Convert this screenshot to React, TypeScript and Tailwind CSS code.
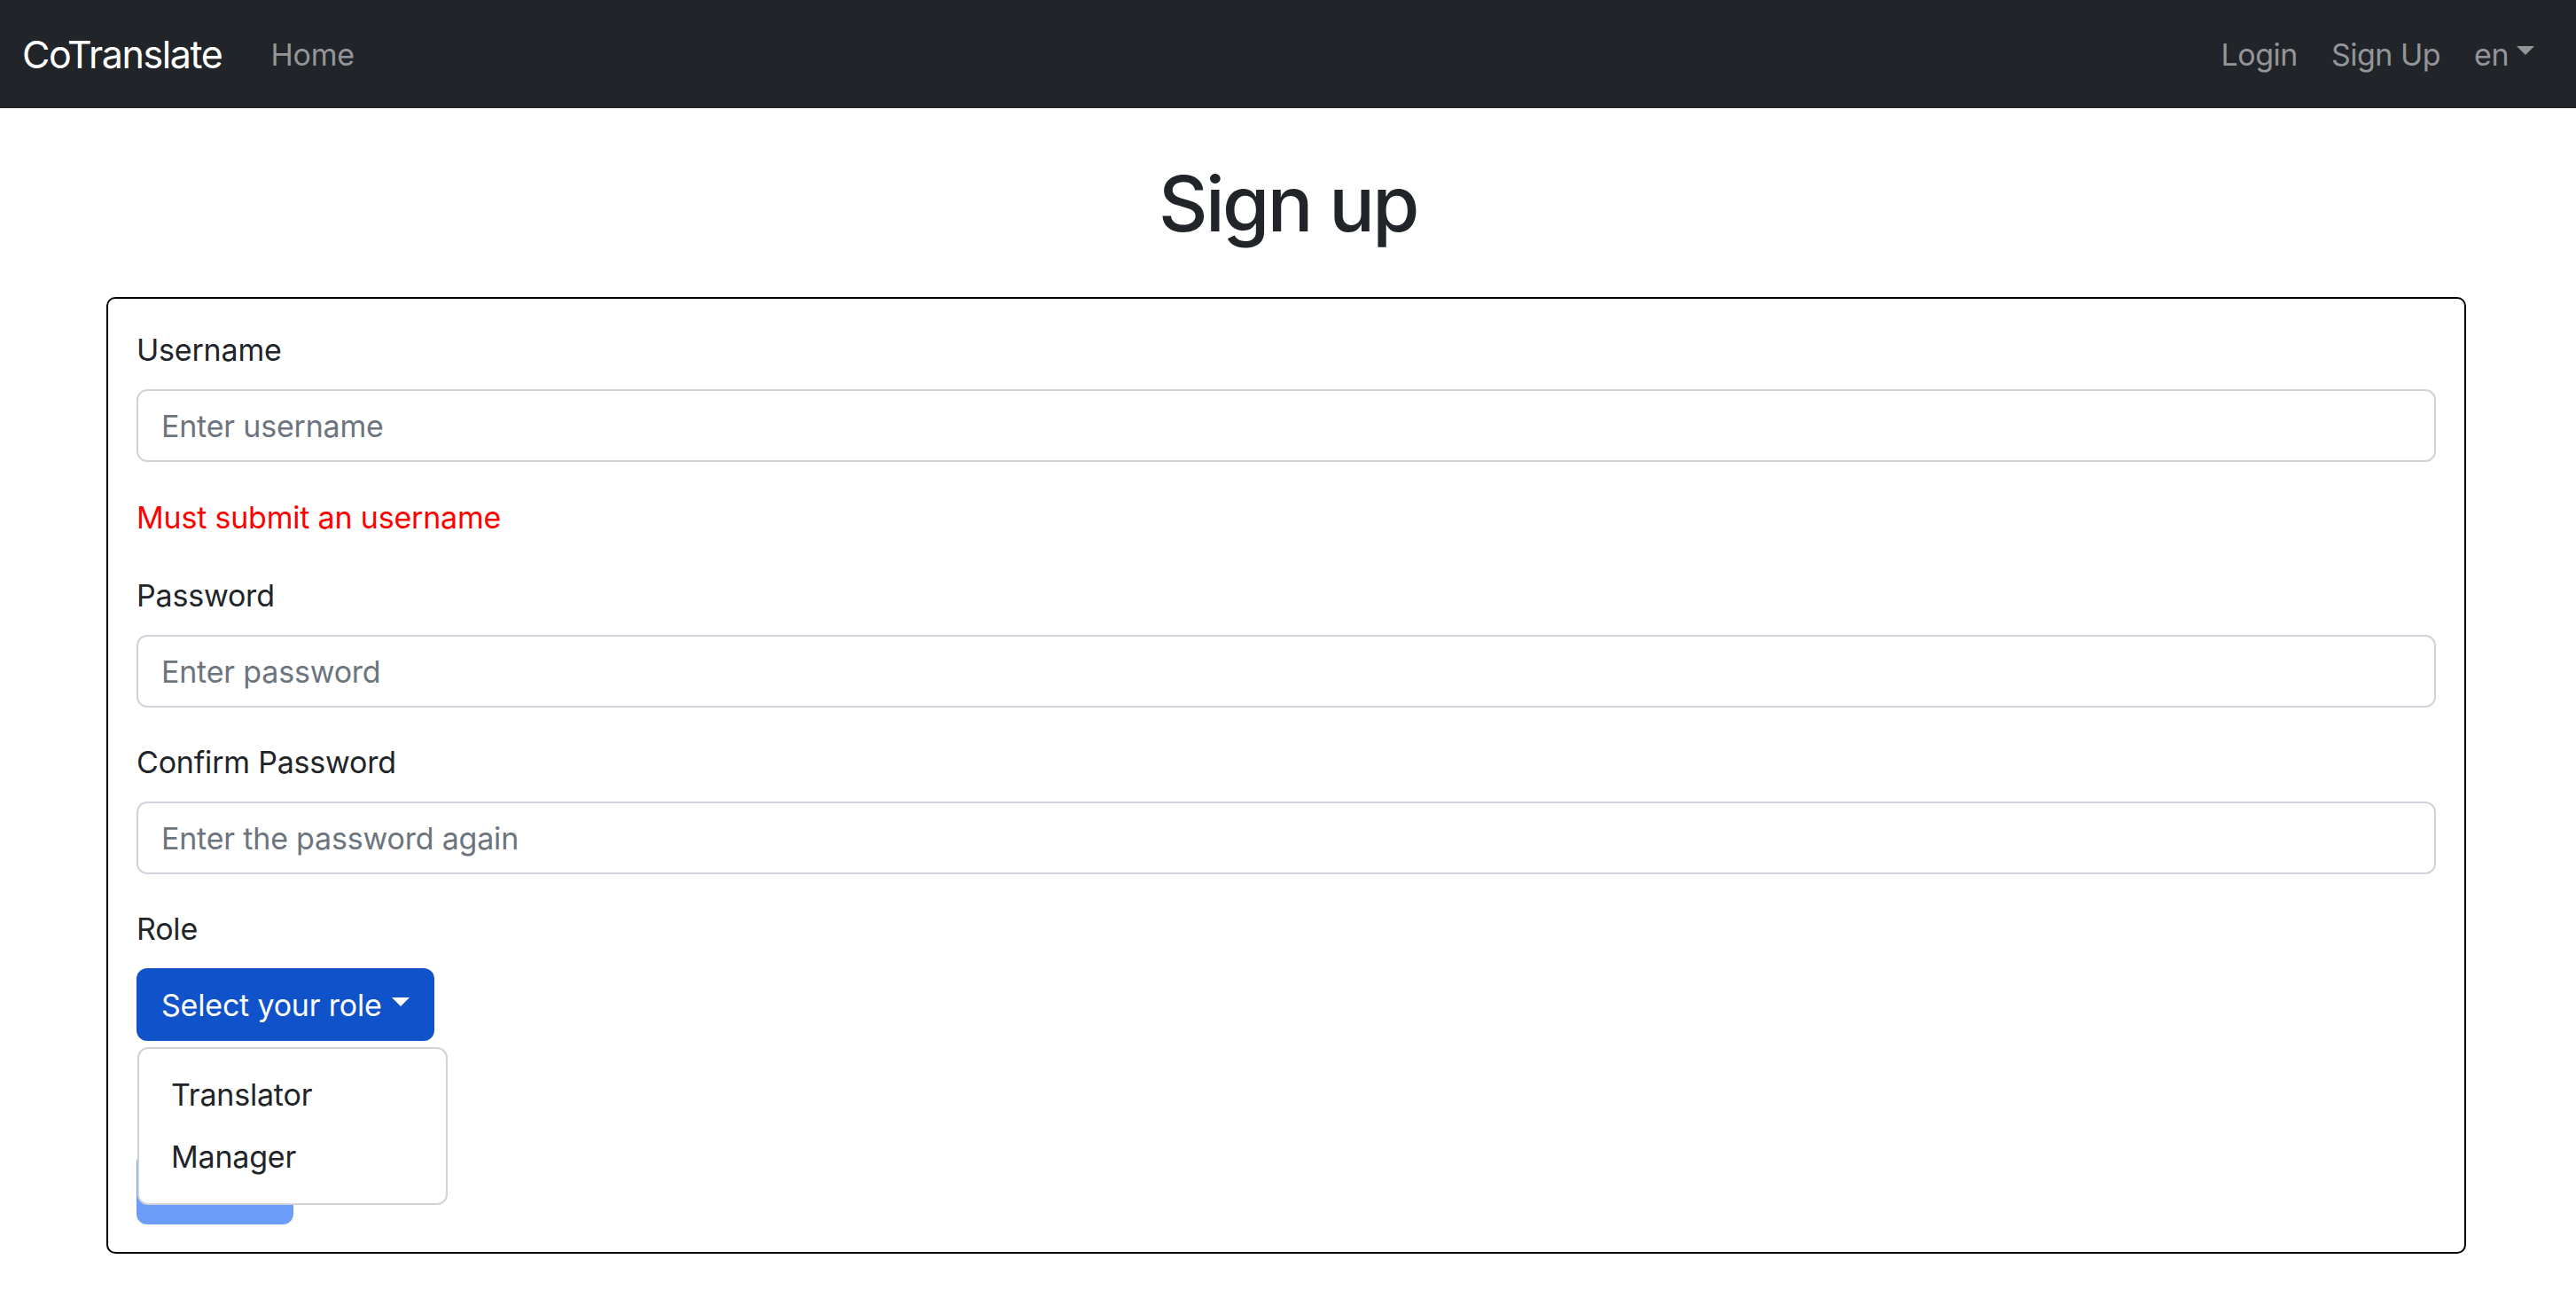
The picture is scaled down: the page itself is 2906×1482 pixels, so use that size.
import React from 'react';

function Caret({ className }: { className?: string }) {
    return (
        <svg className={className} width="20" height="10" viewBox="0 0 20 10" fill="currentColor">
            <polygon points="0,0 20,0 10,10" />
        </svg>
    );
}

function Field({ label, placeholder, type = 'text', top }: { label: string; placeholder: string; type?: string; top: string }) {
    return (
        <div className={top}>
            <label className="block leading-[51px] text-[34px] text-[#212529]">{label}</label>
            <input
                type={type}
                placeholder={placeholder}
                className="mt-[19px] block h-[82px] w-full rounded-[12px] border-2 border-[#ced4da] bg-white px-[26px] text-[34px] tracking-[-0.2px] text-[#212529] outline-none placeholder:text-[#6c757d]"
            />
        </div>
    );
}

export default function App() {
    return (
        <div className="min-h-[1482px] bg-white font-['Inter','Noto_Sans',sans-serif] tracking-[-0.2px]">
            {/* Navbar */}
            <nav className="flex h-[122px] items-center justify-between bg-[#212529] pl-[25px] pr-[47px]">
                <div className="flex items-center">
                    <span className="text-[43px] leading-[65px] tracking-[-1.4px] text-white">CoTranslate</span>
                    <a className="ml-[55px] text-[34px] text-[#939598]">Home</a>
                </div>
                <div className="flex items-center gap-[38px] text-[34px] tracking-[-0.5px] text-[#939598]">
                    <a>Login</a>
                    <a>Sign Up</a>
                    <a className="flex items-center">
                        en
                        <Caret className="ml-[9px] -mt-[8px]" />
                    </a>
                </div>
            </nav>

            <h1 className="mt-[57px] text-center text-[86px] font-medium leading-[103px] tracking-[-2.6px] text-[#212529]">Sign up</h1>

            {/* Form box */}
            <div className="ml-[120px] mt-[53px] w-[2662px] rounded-[10px] border-2 border-black px-[32px] pb-[31px] pt-[32px]">
                <Field label="Username" placeholder="Enter username" top="" />
                <p className="mt-[37px] text-[34px] leading-[51px] text-[#ff0000]">Must submit an username</p>
                <Field label="Password" placeholder="Enter password" type="password" top="mt-[37px]" />
                <Field label="Confirm Password" placeholder="Enter the password again" type="password" top="mt-[36px]" />

                <div className="mt-[36px]">
                    <label className="block text-[34px] leading-[51px] text-[#212529]">Role</label>
                    <div className="relative mt-[19px]">
                        <button className="flex h-[82px] items-center rounded-[12px] bg-[#1052c9] px-[28px] text-[34px] text-white">
                            Select your role
                            <Caret className="ml-[11px] -mt-[6px]" />
                        </button>
                        <ul className="absolute left-[1px] top-[89px] z-10 w-[350px] rounded-[12px] border-2 border-[#d3d3d3] bg-white py-[17px]">
                            <li className="px-[36px] text-[34px] leading-[70px] text-[#212529]">Translator</li>
                            <li className="px-[36px] text-[34px] leading-[70px] text-[#212529]">Manager</li>
                        </ul>
                    </div>
                </div>

                <button className="mt-[125px] h-[82px] w-[177px] rounded-[12px] bg-[#6c9dfb] text-[34px] text-white">Submit</button>
            </div>
        </div>
    );
}
